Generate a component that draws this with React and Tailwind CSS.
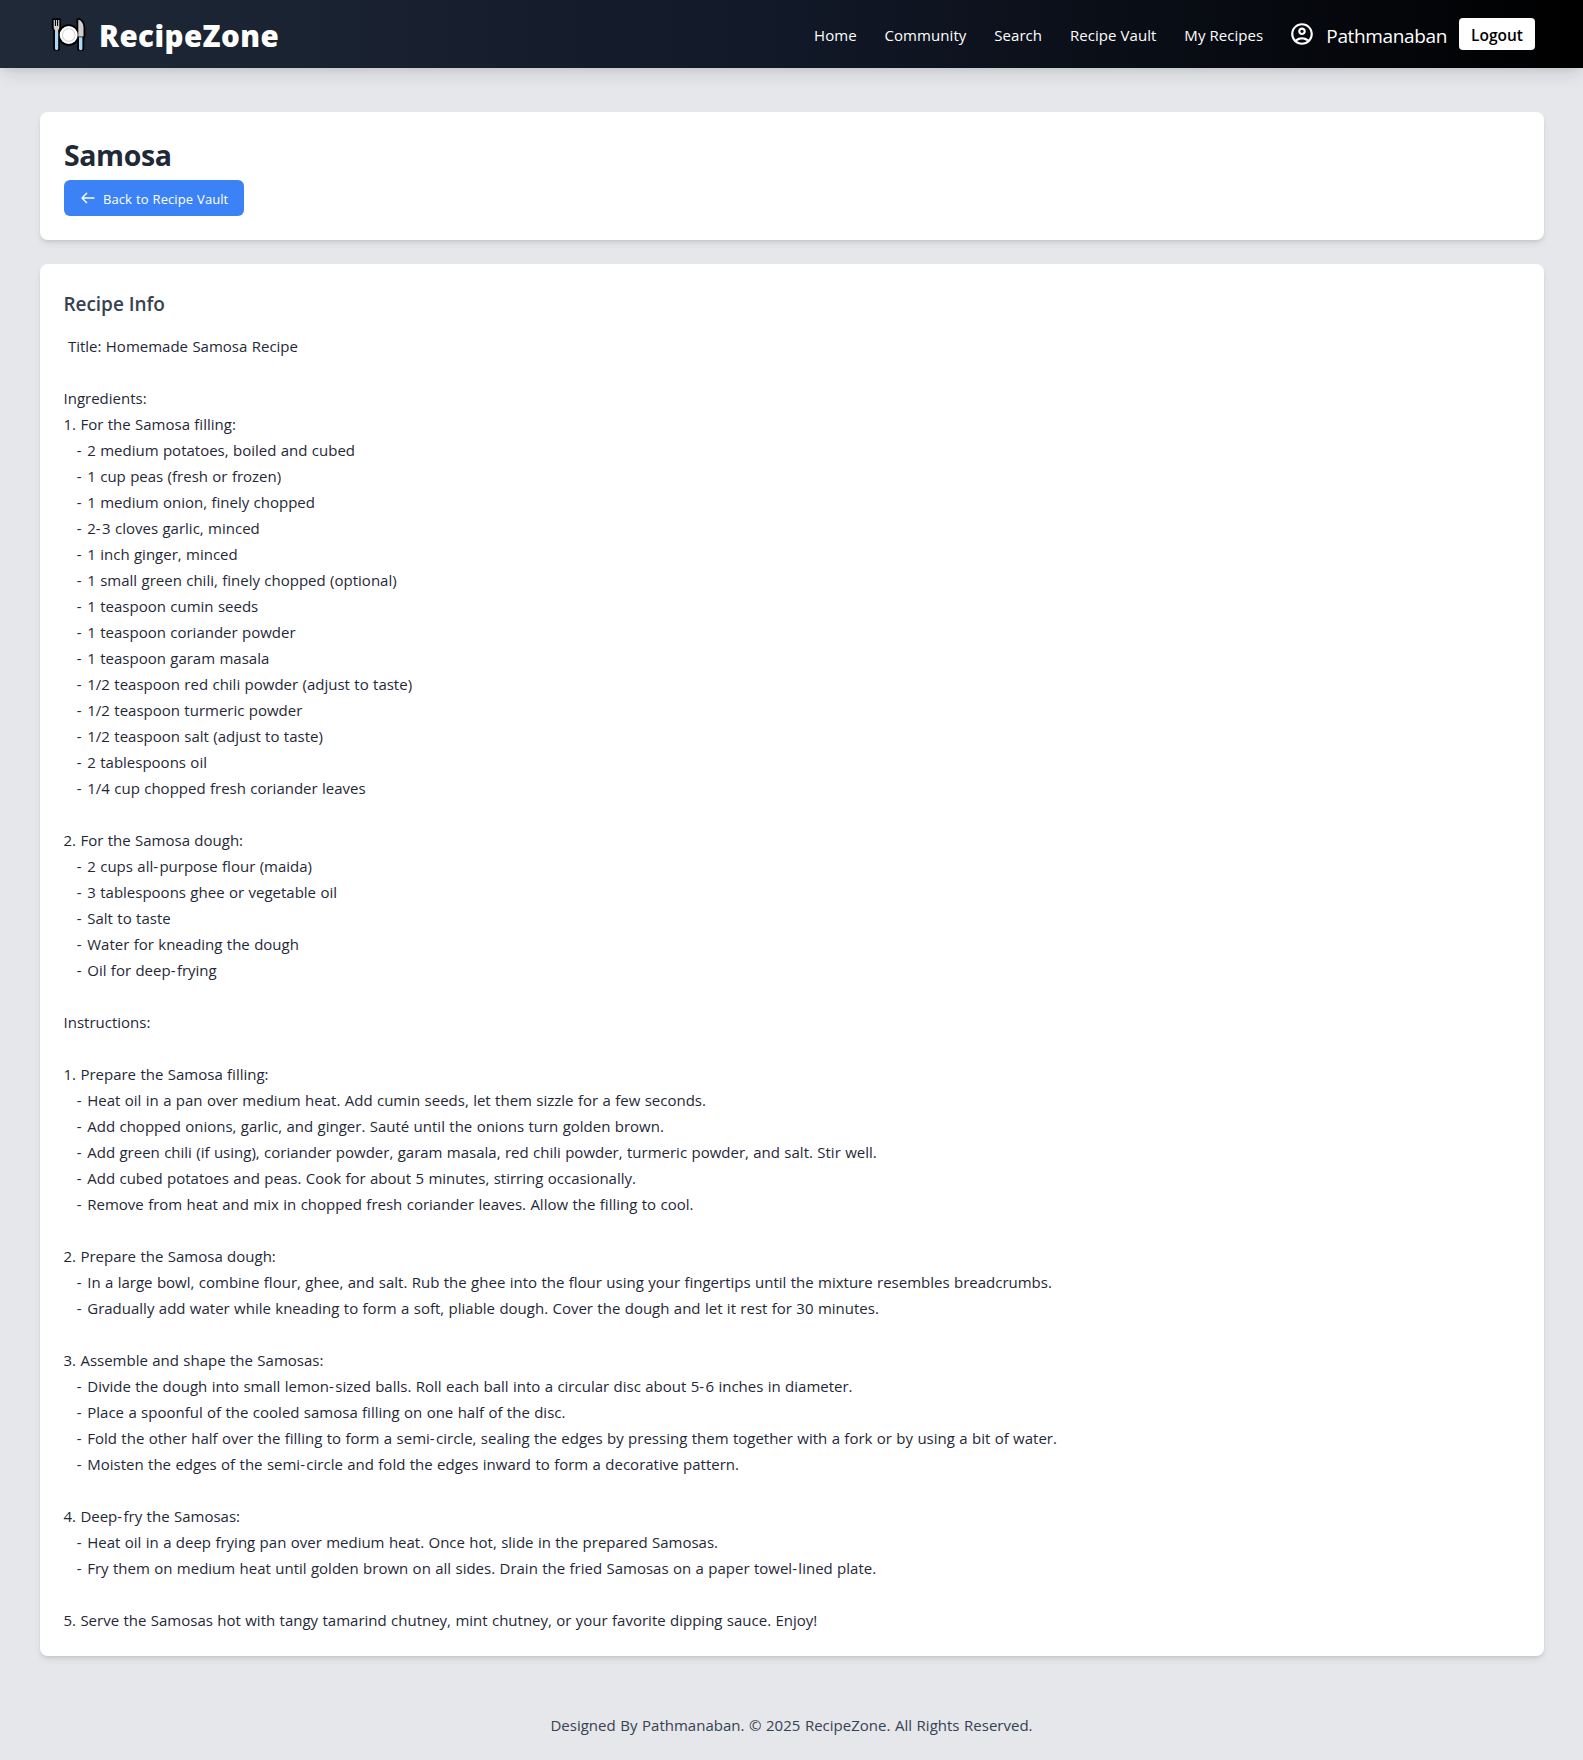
import { MdOutlineAccountCircle } from "react-icons/md";

const RECIPE = ` Title: Homemade Samosa Recipe

Ingredients:
1. For the Samosa filling:
   - 2 medium potatoes, boiled and cubed
   - 1 cup peas (fresh or frozen)
   - 1 medium onion, finely chopped
   - 2-3 cloves garlic, minced
   - 1 inch ginger, minced
   - 1 small green chili, finely chopped (optional)
   - 1 teaspoon cumin seeds
   - 1 teaspoon coriander powder
   - 1 teaspoon garam masala
   - 1/2 teaspoon red chili powder (adjust to taste)
   - 1/2 teaspoon turmeric powder
   - 1/2 teaspoon salt (adjust to taste)
   - 2 tablespoons oil
   - 1/4 cup chopped fresh coriander leaves

2. For the Samosa dough:
   - 2 cups all-purpose flour (maida)
   - 3 tablespoons ghee or vegetable oil
   - Salt to taste
   - Water for kneading the dough
   - Oil for deep-frying

Instructions:

1. Prepare the Samosa filling:
   - Heat oil in a pan over medium heat. Add cumin seeds, let them sizzle for a few seconds.
   - Add chopped onions, garlic, and ginger. Sauté until the onions turn golden brown.
   - Add green chili (if using), coriander powder, garam masala, red chili powder, turmeric powder, and salt. Stir well.
   - Add cubed potatoes and peas. Cook for about 5 minutes, stirring occasionally.
   - Remove from heat and mix in chopped fresh coriander leaves. Allow the filling to cool.

2. Prepare the Samosa dough:
   - In a large bowl, combine flour, ghee, and salt. Rub the ghee into the flour using your fingertips until the mixture resembles breadcrumbs.
   - Gradually add water while kneading to form a soft, pliable dough. Cover the dough and let it rest for 30 minutes.

3. Assemble and shape the Samosas:
   - Divide the dough into small lemon-sized balls. Roll each ball into a circular disc about 5-6 inches in diameter.
   - Place a spoonful of the cooled samosa filling on one half of the disc.
   - Fold the other half over the filling to form a semi-circle, sealing the edges by pressing them together with a fork or by using a bit of water.
   - Moisten the edges of the semi-circle and fold the edges inward to form a decorative pattern.

4. Deep-fry the Samosas:
   - Heat oil in a deep frying pan over medium heat. Once hot, slide in the prepared Samosas.
   - Fry them on medium heat until golden brown on all sides. Drain the fried Samosas on a paper towel-lined plate.

5. Serve the Samosas hot with tangy tamarind chutney, mint chutney, or your favorite dipping sauce. Enjoy!`;

const LINKS = ["Home", "Community", "Search", "Recipe Vault", "My Recipes"];

function PlateIcon() {
  return (
    <svg viewBox="0 0 36 38" className="h-[38px] w-9 shrink-0">
      <g fill="#000" stroke="#000" strokeWidth="3.6" strokeLinejoin="round">
        <path d="M2.700 5h5.600v8l-1.200 2.400V34H4V15.400L2.700 13z" />
        <path d="M27.300 4.700c3 .4 5.200 4 5.200 8v8.800h-1V34H28z" />
        <circle cx="17.700" cy="20" r="9" />
      </g>
      <path d="M2.700 5h1.200v6h1.100V5h1v6h1.100V5h1.200v8l-1.200 2.400V18H4v-2.600L2.700 13z" fill="#cfcfcf" />
      <path d="M4 17.300h3.200v16.200a1.600 1.600 0 0 1-3.200 0z" fill="#a6d9f5" />
      <path d="M27.300 4.700c3 .4 5.200 4 5.200 8v8.800h-5.200z" fill="#cfcfcf" />
      <path d="M28 22.300h3.400v11.200a1.600 1.600 0 0 1-3.400 0z" fill="#a6d9f5" />
      <circle cx="17.700" cy="20" r="9" fill="#fff" />
      <circle cx="17.700" cy="20" r="6.300" fill="#fff" stroke="#dadada" strokeWidth="1.200" />
    </svg>
  );
}

function Header() {
  return (
    <header className="relative flex h-[68px] items-center justify-between bg-linear-to-r/srgb from-[#1f2937] via-[#111827] to-black pr-12 pl-[51px] text-white shadow-[0_10px_15px_-3px_rgba(0,0,0,0.1),0_4px_6px_-2px_rgba(0,0,0,0.05)]">
      <div className="flex items-center">
        <PlateIcon />
        <span className="ml-[12px] pt-1 font-['Noto_Sans',sans-serif] text-[29.5px] leading-10 font-black tracking-[0.45px]">RecipeZone</span>
      </div>
      <div className="flex items-center">
        <nav className="mr-[26px] flex gap-[27.8px] pt-0.5 text-[15px] leading-6 tracking-[0.07px]">
          {LINKS.map((label) => (
            <a key={label} className="whitespace-nowrap">{label}</a>
          ))}
        </nav>
        <MdOutlineAccountCircle className="mr-[11px] size-[26px]" />
        <span className="mr-[12px] pt-1 text-[19px] leading-7 tracking-[-0.36px]">Pathmanaban</span>
        <button className="h-8 w-[76px] rounded bg-white pt-0.5 text-[15.5px] leading-6 font-semibold text-black">Logout</button>
      </div>
    </header>
  );
}

/* One recipe line; hyphens are set a little wider than the typeface draws them. */
function Line({ text }) {
  return (
    <div className="h-[26px]">
      {text.split(/(-)/).map((part, i) =>
        part === "-" ? <span key={i} className="tracking-[1.4px]">-</span> : part
      )}
    </div>
  );
}

export default function App() {
  return (
    <div className="flex min-h-[1760px] flex-col bg-[#e5e7eb] font-['Open_Sans',sans-serif]">
      <Header />
      <main className="mx-10 mt-11 mr-[39px] flex flex-col gap-6">
        <section className="h-32 rounded-lg bg-white p-6 shadow-md">
          <h1 className="text-[28.500px] leading-[38px] font-bold tracking-[-0.4px] text-[#1f2937]">Samosa</h1>
          <button className="mt-1.5 flex h-9 w-[180px] items-center rounded-md bg-[#3b82f6] px-4 text-[13px] leading-5 whitespace-nowrap text-white">
            <svg viewBox="0 0 24 24" className="mr-[7px] size-4 shrink-0" fill="none" stroke="currentColor" strokeWidth="2" strokeLinecap="round" strokeLinejoin="round">
              <path d="M10 19l-7-7m0 0l7-7m-7 7h18" />
            </svg>
            <span className="pt-0.5 tracking-[0.08px] [word-spacing:0.5px]">Back to Recipe Vault</span>
          </button>
        </section>
        <section className="rounded-lg bg-white pt-6 pr-6 pb-[23px] pl-[23.5px] shadow-md">
          <h2 className="mb-[13px] text-[19px] leading-8 font-semibold tracking-[-0.05px] text-[#374151]">Recipe Info</h2>
          <div className="text-[15px] leading-[26px] whitespace-pre text-[#1f2937] [word-spacing:0.48px]">
            {RECIPE.split("\n").map((text, i) => (
              <Line key={i} text={text} />
            ))}
          </div>
        </section>
      </main>
      <footer className="mt-[57px] text-center text-[15px] leading-6 text-[#374151] [word-spacing:0.7px]">
        Designed By Pathmanaban. © 2025 RecipeZone. All Rights Reserved.
      </footer>
    </div>
  );
}
